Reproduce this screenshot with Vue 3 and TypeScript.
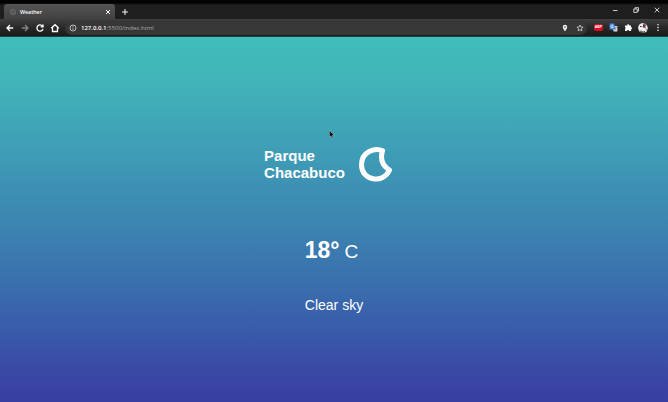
<script setup lang="ts">
interface Weather {
  place: string[]
  temperature: number
  unit: string
  description: string
}

const weather: Weather = {
  place: ['Parque', 'Chacabuco'],
  temperature: 18,
  unit: 'C',
  description: 'Clear sky',
}
</script>

<template>
  <div class="browser">
    <header class="tabs">
      <div class="tab">
        <svg class="favicon" viewBox="0 0 8 8"><circle cx="4" cy="4" r="2.5" /><path d="M2 2.5 6 6" /></svg>
        <span class="tab-title">Weather</span>
        <svg class="close" viewBox="0 0 6 6"><path d="m1 1 4 4M5 1 1 5" /></svg>
      </div>
      <svg class="plus" viewBox="0 0 8 8"><path d="M4 1v6M1 4h6" /></svg>
      <div class="window-controls">
        <svg viewBox="0 0 8 8"><path d="M2 4.5h4.5" /></svg>
        <svg viewBox="0 0 8 8"><path d="M1.8 3h3.4v3.4H1.8zM3 3V1.7h3.5v3.5H5.2" /></svg>
        <svg viewBox="0 0 8 8"><path d="m1.7 1.7 4.6 4.6m0-4.6L1.7 6.3" /></svg>
      </div>
    </header>
    <nav class="toolbar">
      <svg viewBox="0 0 10 10"><path d="M8.2 5H2m3-3L2 5l3 3" /></svg>
      <svg class="dim" viewBox="0 0 10 10"><path d="M1.8 5H8M5 2l3 3-3 3" /></svg>
      <svg viewBox="0 0 10 10"><path d="M7.5 3.1A3.1 3.1 0 1 0 8 6M8 1.5v2.3H5.7" /></svg>
      <svg viewBox="0 0 10 10"><path d="M1.2 5.2 5 1.7l3.8 3.5M2.5 4.5v4h5v-4" /></svg>
      <div class="address">
        <svg class="info" viewBox="0 0 8 8"><circle cx="4" cy="4" r="3" /><path d="M4 3.7v2M4 2v.8" /></svg>
        <span class="url"><b>127.0.0.1</b>:5500/index.html</span>
        <svg class="pin" viewBox="0 0 8 8"><path fill-rule="evenodd" d="M4 .8a2.2 2.2 0 0 1 2.2 2.3C6.2 4.8 4 7.4 4 7.4S1.8 4.8 1.8 3.1A2.2 2.2 0 0 1 4 .8m0 1.5a.7.7 0 1 0 0 1.5.7.7 0 0 0 0-1.5" /></svg>
        <svg class="star" viewBox="0 0 8 8"><path d="m4 1 .9 2 2.2.2-1.7 1.5.5 2.2L4 5.7 2.1 6.9l.5-2.2L.9 3.2 3.1 3z" /></svg>
      </div>
      <div class="extensions">
        <span class="abp">ABP</span>
        <svg viewBox="0 0 9 9"><path fill="#d4d8dd" d="M3.5 3H8.4v5.4H4.5z" /><path fill="#4587e8" d="M.6.6h4.6l1.3 6H.6z" /><path stroke="#fff" stroke-width=".8" fill="none" d="M4.2 2.7a1.3 1.3 0 1 0 .2 1.2H3.2" /><path stroke="#7b8490" stroke-width=".6" fill="none" d="M5.7 4.5h2M7 4.5 5.7 7" /></svg>
        <svg viewBox="0 0 9 9"><path fill="#fff" d="M1 2.4h2.1a1.1 1.1 0 1 1 2.2 0H7v1.8a1.1 1.1 0 1 1 0 2.2V8H5.2a1.1 1.1 0 0 0-2.2 0H1V6a1.1 1.1 0 0 0 0-2z" /></svg>
        <svg class="avatar" viewBox="0 0 12 12"><circle cx="6" cy="6" r="4.9" fill="#8b7b7e" /><path fill="#f2eeee" d="M1.1 6 2 3l3-1.9L7 2 5 5l3 1 2 3-2 1.8-2-2-3 1.5zM8 2l2 2 .8 3-1.7.3z" /><path fill="#713d48" d="m6 2 3 1-1.5 3L6 5z" /><path fill="#302d31" d="M4 8 3 10.2l2 .6zm3.5.5-.8 2.3 1.5-.5zM3 4h1.5v1H3z" /></svg>
        <svg class="menu" viewBox="0 0 4 9"><circle cx="2" cy="1.7" r=".8" /><circle cx="2" cy="4.5" r=".8" /><circle cx="2" cy="7.3" r=".8" /></svg>
      </div>
    </nav>
    <main class="page">
      <section class="location">
        <h1><span v-for="line in weather.place" :key="line">{{ line }}</span></h1>
        <svg class="moon" viewBox="0 0 36 38"><path d="M24.6 4.8C17 1.4 3.5 5.4 3.5 18.9c0 16.2 22 19.2 28 5.2-5.6-3.6-10.1-9.8-6.9-19.3Z" /></svg>
      </section>
      <section class="degrees"><strong>{{ weather.temperature }}°</strong><span>{{ weather.unit }}</span></section>
      <p class="description">{{ weather.description }}</p>
      <svg class="cursor" viewBox="0 0 6 9"><path d="M.4.4v6.8L2 5.8l1.2 2.5 1.1-.5-1.1-2.4h2.1z" /></svg>
    </main>
  </div>
</template>

<style>
body { margin: 0; }
</style>

<style scoped>
.browser {
  width: 668px;
  height: 402px;
  display: flex;
  flex-direction: column;
  overflow: hidden;
  font-family: "Liberation Sans", Arial, sans-serif;
  color: #fff;
}
svg { display: block; flex: none; }
.tabs {
  height: 19px;
  box-sizing: border-box;
  padding: 4px 8px 0 4px;
  display: flex;
  background: linear-gradient(#030303 3px, #1e1e1e 5px);
}
.tab {
  width: 111px;
  height: 15px;
  box-sizing: border-box;
  padding: 0 4px 0 5px;
  display: flex;
  align-items: center;
  background: linear-gradient(#555, #414141);
  border-radius: 3px 3px 0 0;
}
.favicon { width: 8px; height: 8px; fill: none; stroke: #777; stroke-width: .8; }
.tab-title { margin-left: 3px; font: 600 5.3px "Open Sans", sans-serif; flex: 1; }
.close { width: 6px; height: 6px; stroke: #fff; stroke-width: 1; }
.plus { width: 8px; height: 8px; margin: 4px 0 0 6px; stroke: #eee; stroke-width: 1.1; }
.window-controls { display: flex; gap: 13px; margin: 2px -1px 0 auto; }
.window-controls svg { width: 8px; height: 8px; fill: none; stroke: #ddd; stroke-width: .9; }
.toolbar {
  height: 18px;
  box-sizing: border-box;
  padding: 0 8px 0 5px;
  display: flex;
  align-items: center;
  gap: 5px;
  background: linear-gradient(#404040, #292929 50%, #1a1a1a);
  border-bottom: 1px solid #174744;
}
.toolbar > svg { width: 10px; height: 10px; fill: none; stroke: #fff; stroke-width: 1.3; }
.toolbar > .dim { stroke: #888; }
.address {
  width: 522px;
  height: 14px;
  display: flex;
  align-items: center;
  background: #373737;
  border-radius: 7px;
}
.info { width: 8px; height: 8px; margin-left: 4px; fill: none; stroke: #ddd; stroke-width: .8; }
.url { margin-left: 4px; font: 6px "Open Sans", sans-serif; color: #aaa; flex: 1; }
.url b { font-weight: 600; color: #fff; }
.pin, .star { width: 8px; height: 8px; fill: #eee; }
.star { margin: 0 3px 0 7px; fill: none; stroke: #ddd; stroke-width: .75; }
.extensions { display: flex; align-items: center; gap: 6px; margin-left: auto; }
.extensions > svg { width: 9px; height: 9px; }
.abp { width: 9px; height: 7px; border-radius: 2px; background: #d40d25; font: bold 3.5px/7px "Liberation Sans", sans-serif; text-align: center; }
.extensions > .avatar { width: 12px; height: 12px; margin-left: -2px; }
.extensions > .menu { width: 4px; fill: #eee; margin-left: 1px; }
.page {
  position: relative;
  flex: 1;
  display: flex;
  flex-direction: column;
  align-items: center;
  background: linear-gradient(#40bcbb 0, #41b4b9 12%, #3e9fb6 30%, #3c86b2 50%, #3a70ad 67%, #395bab 80%, #3946a4 94%, #393fa2 100%);
}
.location { margin: 109px 10px 0 0; display: flex; align-items: center; gap: 13px; }
h1 { margin: -3px 0 0; font-size: 15px; line-height: 17px; font-weight: 700; }
h1 span { display: block; }
.moon { width: 36px; height: 38px; fill: none; stroke: #fff; stroke-width: 5; stroke-linejoin: round; }
.degrees { margin-top: 53px; margin-right: 5px; height: 26px; display: flex; align-items: baseline; gap: 5px; line-height: 26px; }
.degrees strong { font-size: 23px; }
.degrees span { font-size: 19px; }
.description { margin: 34px 0 0; font-size: 14px; line-height: 17px; }
.cursor { position: absolute; left: 329px; top: 93px; width: 6px; height: 9px; fill: #090b0c; stroke: #bbd1d6; stroke-width: .45; }
</style>
